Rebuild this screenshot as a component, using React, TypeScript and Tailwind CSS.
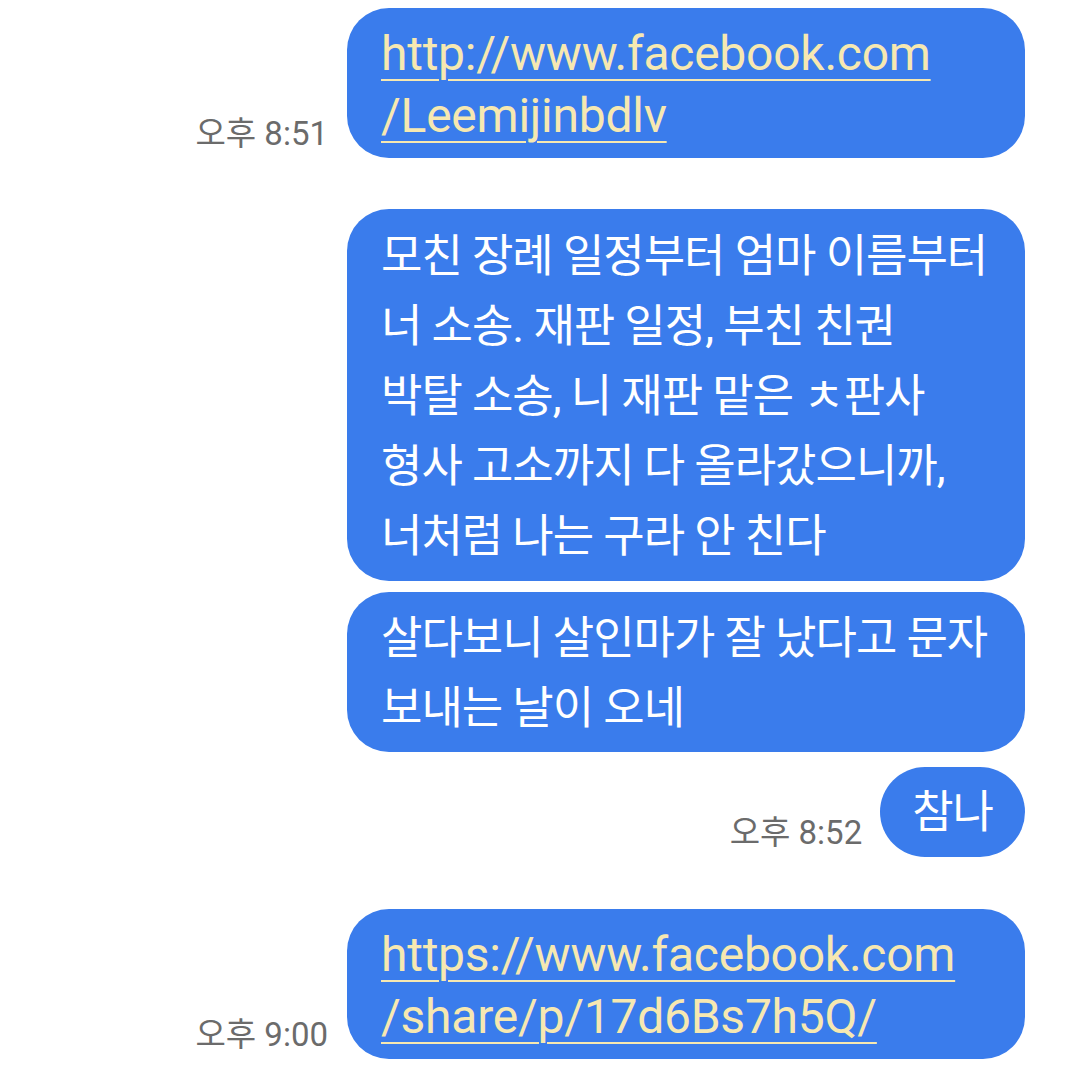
import React from "react";

const KR = { fontFamily: '"Roboto", "Noto Sans CJK KR", sans-serif' };

function Time({ t }: { t: string }) {
  return (
    <span
      className="text-[33px] leading-[38px] text-[#6b6b6b] mb-[5px] whitespace-nowrap"
      style={KR}
    >
      {t}
    </span>
  );
}

function LinkBubble({ l1, l2 }: { l1: string; l2: string }) {
  return (
    <div className="w-[678px] rounded-[42px] bg-[#3a7cec] pl-[34px] pr-[12px] pt-[15px] pb-[11px]">
      <div
        className="text-[48px] leading-[62px] text-[#f6e8b1] underline decoration-2 underline-offset-[9px] tracking-[-0.25px]"
        style={KR}
      >
        {l1}
        <br />
        {l2}
      </div>
    </div>
  );
}

export default function App() {
  return (
    <div className="w-[1080px] h-[1080px] bg-white overflow-hidden flex flex-col items-end pr-[55px] pt-[8px]">
      <div className="flex items-end gap-[19px]">
        <Time t="오후 8:51" />
        <LinkBubble l1="http://www.facebook.com" l2="/Leemijinbdlv" />
      </div>

      <div className="mt-[51px] w-[678px] rounded-[42px] bg-[#3a7cec] pl-[34px] pr-[12px] pt-[13px] pb-[9px]">
        <div className="text-[45px] leading-[70px] text-white tracking-[-1px]" style={KR}>
          모친 장례 일정부터 엄마 이름부터
          <br />
          너 소송. 재판 일정, 부친 친권
          <br />
          박탈 소송, 니 재판 맡은 ㅊ판사
          <br />
          형사 고소까지 다 올라갔으니까,
          <br />
          너처럼 나는 구라 안 친다
        </div>
      </div>

      <div className="mt-[11px] w-[678px] rounded-[42px] bg-[#3a7cec] pl-[34px] pr-[12px] pt-[12px] pb-[8px]">
        <div className="text-[45px] leading-[70px] text-white tracking-[-1px]" style={KR}>
          살다보니 살인마가 잘 났다고 문자
          <br />
          보내는 날이 오네
        </div>
      </div>

      <div className="mt-[15px] flex items-end gap-[18px]">
        <Time t="오후 8:52" />
        <div className="rounded-[45px] bg-[#3a7cec] px-[32px] pt-[11px] pb-[9px]">
          <div className="text-[45px] leading-[70px] text-white tracking-[-1px]" style={KR}>
            참나
          </div>
        </div>
      </div>

      <div className="mt-[52px] flex items-end gap-[19px]">
        <Time t="오후 9:00" />
        <LinkBubble l1="https://www.facebook.com" l2="/share/p/17d6Bs7h5Q/" />
      </div>
    </div>
  );
}
